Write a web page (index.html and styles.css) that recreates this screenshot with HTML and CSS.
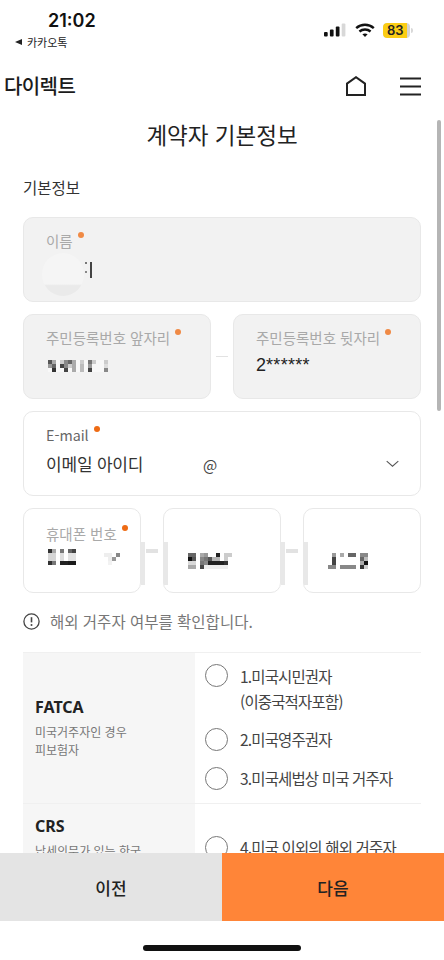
FILE: index.html
```html
<!DOCTYPE html>
<html lang="ko">
<head>
<meta charset="utf-8">
<title>계약자 기본정보</title>
<link rel="stylesheet" href="styles.css">
</head>
<body>
<div class="screen">
  <div class="status">
    <div class="status-left">
      <div class="time">21:02</div>
      <div class="back"><span class="tri"></span>카카오톡</div>
    </div>
    <div class="status-right">
      <svg class="signal" width="22" height="14" viewBox="0 0 22 14"><rect x="0" y="9" width="3.7" height="4.5" rx="1" fill="#111"/><rect x="5.9" y="6.5" width="3.7" height="7" rx="1" fill="#111"/><rect x="11.8" y="3.5" width="3.7" height="10" rx="1" fill="#111"/><rect x="17.7" y="0.5" width="3.7" height="13" rx="1" fill="#d8d8d8"/></svg>
      <svg class="wifi" width="20" height="15" viewBox="0 0 20 15"><path d="M1.2 5.2C6.2 .6 13.8 .6 18.8 5.2" fill="none" stroke="#111" stroke-width="2.4"/><path d="M4.4 8.5C7.6 5.8 12.4 5.8 15.6 8.5" fill="none" stroke="#111" stroke-width="2.4"/><path d="M7.4 11.3C8.9 10.1 11.1 10.1 12.6 11.3L10 14Z" fill="#111"/></svg>
      <div class="battery"><span class="batt-fill">83</span></div>
      <span class="batt-tip"></span>
    </div>
  </div>
  <header class="topbar">
    <div class="brand">다이렉트</div>
    <div class="top-icons">
      <svg width="20" height="20" viewBox="0 0 20 20"><path d="M1 19V7.6L10 1.2 19 7.6V19Z" fill="none" stroke="#222" stroke-width="2" stroke-linejoin="miter"/></svg>
      <svg width="21" height="19" viewBox="0 0 21 19"><path d="M0 1.5h21M0 9.5h21M0 17.5h21" stroke="#222" stroke-width="2"/></svg>
    </div>
  </header>
  <main class="content">
    <h1 class="title">계약자 기본정보</h1>
    <h2 class="section">기본정보</h2>

    <div class="field disabled">
      <div class="label">이름<i class="dot"></i></div>
      <div class="name-value"><span class="name-blur"></span><span class="caret"></span></div>
    </div>

    <div class="row id-row">
      <div class="field disabled">
        <div class="label">주민등록번호 앞자리<i class="dot"></i></div>
        <svg class="mosaic m-id" width="60" height="12" viewBox="0 0 60 12" shape-rendering="crispEdges">
          <rect width="60" height="12" fill="#f8f8f8"/>
          <rect x="0" y="0" width="4" height="4" fill="#555"/><rect x="4" y="0" width="4" height="4" fill="#aaa"/><rect x="12" y="0" width="4" height="4" fill="#ccc"/><rect x="16" y="0" width="4" height="4" fill="#888"/><rect x="20" y="0" width="4" height="4" fill="#666"/><rect x="24" y="0" width="4" height="4" fill="#aaa"/><rect x="32" y="0" width="4" height="4" fill="#ccc"/><rect x="40" y="0" width="4" height="4" fill="#777"/><rect x="44" y="0" width="4" height="4" fill="#ccc"/><rect x="56" y="0" width="4" height="4" fill="#ccc"/>
          <rect x="0" y="4" width="4" height="4" fill="#999"/><rect x="4" y="4" width="4" height="4" fill="#666"/><rect x="12" y="4" width="4" height="4" fill="#444"/><rect x="16" y="4" width="4" height="4" fill="#888"/><rect x="20" y="4" width="4" height="4" fill="#ccc"/><rect x="24" y="4" width="4" height="4" fill="#aaa"/><rect x="32" y="4" width="4" height="4" fill="#bbb"/><rect x="40" y="4" width="4" height="4" fill="#999"/><rect x="56" y="4" width="4" height="4" fill="#ddd"/>
          <rect x="4" y="8" width="4" height="4" fill="#333"/><rect x="16" y="8" width="4" height="4" fill="#444"/><rect x="24" y="8" width="4" height="4" fill="#aaa"/><rect x="32" y="8" width="4" height="4" fill="#bbb"/><rect x="40" y="8" width="4" height="4" fill="#444"/><rect x="56" y="8" width="4" height="4" fill="#888"/>
        </svg>
      </div>
      <span class="dash light"></span>
      <div class="field disabled">
        <div class="label">주민등록번호 뒷자리<i class="dot"></i></div>
        <div class="rrn">2<span class="stars">******</span></div>
      </div>
    </div>

    <div class="field">
      <div class="label dark">E-mail<i class="dot strong"></i></div>
      <div class="email-line">
        <span class="email-id">이메일 아이디</span>
        <span class="at">@</span>
        <svg class="chev" width="13" height="8" viewBox="0 0 13 8"><path d="M.7 1.2 6.5 6.2 12.3 1.2" fill="none" stroke="#555" stroke-width="1.1"/></svg>
      </div>
    </div>

    <div class="row phone-row">
      <div class="field phone first">
        <div class="label">휴대폰 번호<i class="dot strong"></i></div>
        <svg class="mosaic m-p1" width="72" height="16" viewBox="0 0 72 16" shape-rendering="crispEdges">
          <rect x="0" y="0" width="4" height="4" fill="#333"/><rect x="4" y="0" width="4" height="4" fill="#aaa"/><rect x="12" y="0" width="4" height="4" fill="#777"/><rect x="20" y="0" width="4" height="4" fill="#666"/><rect x="24" y="0" width="4" height="4" fill="#444"/>
          <rect x="0" y="4" width="8" height="8" fill="#d6d6d6"/><rect x="12" y="4" width="4" height="8" fill="#ddd"/><rect x="20" y="4" width="8" height="8" fill="#e2e2e2"/>
          <rect x="0" y="12" width="4" height="4" fill="#333"/><rect x="4" y="12" width="4" height="4" fill="#777"/><rect x="12" y="12" width="8" height="4" fill="#222"/><rect x="20" y="12" width="8" height="4" fill="#1a1a1a"/>
          <rect x="56" y="4" width="8" height="4" fill="#eee"/><rect x="68" y="4" width="4" height="4" fill="#888"/><rect x="64" y="8" width="4" height="4" fill="#999"/><rect x="60" y="8" width="4" height="4" fill="#eee"/><rect x="60" y="12" width="4" height="4" fill="#f2f2f2"/>
        </svg>
      </div>
      <span class="dash"></span>
      <div class="field phone">
        <svg class="mosaic m-rest" width="44" height="16" viewBox="0 0 44 16" shape-rendering="crispEdges">
          <rect x="0" y="0" width="8" height="4" fill="#666"/><rect x="12" y="0" width="4" height="4" fill="#aaa"/><rect x="16" y="0" width="4" height="4" fill="#999"/><rect x="28" y="0" width="4" height="4" fill="#222"/><rect x="36" y="0" width="8" height="4" fill="#ccc"/>
          <rect x="0" y="4" width="4" height="4" fill="#111"/><rect x="4" y="4" width="4" height="4" fill="#555"/><rect x="12" y="4" width="4" height="4" fill="#888"/><rect x="16" y="4" width="4" height="4" fill="#777"/><rect x="20" y="4" width="4" height="4" fill="#555"/><rect x="24" y="4" width="8" height="4" fill="#b5b5b5"/><rect x="36" y="4" width="4" height="4" fill="#ccc"/>
          <rect x="0" y="8" width="8" height="4" fill="#d8d8d8"/><rect x="12" y="8" width="4" height="4" fill="#777"/><rect x="16" y="8" width="4" height="4" fill="#888"/><rect x="20" y="8" width="16" height="4" fill="#222"/><rect x="36" y="8" width="4" height="4" fill="#333"/>
          <rect x="0" y="12" width="8" height="4" fill="#aaa"/><rect x="12" y="12" width="4" height="4" fill="#444"/><rect x="16" y="12" width="24" height="4" fill="#eee"/>
        </svg>
      </div>
      <span class="dash"></span>
      <div class="field phone">
        <svg class="mosaic m-rest" width="40" height="16" viewBox="0 0 40 16" shape-rendering="crispEdges">
          <rect x="4" y="0" width="4" height="4" fill="#999"/><rect x="12" y="0" width="4" height="4" fill="#aaa"/><rect x="20" y="0" width="8" height="4" fill="#666"/><rect x="32" y="0" width="8" height="4" fill="#888"/>
          <rect x="4" y="4" width="4" height="8" fill="#444"/><rect x="32" y="4" width="4" height="4" fill="#666"/><rect x="36" y="4" width="4" height="4" fill="#bbb"/>
          <rect x="32" y="8" width="4" height="4" fill="#aaa"/><rect x="36" y="8" width="4" height="4" fill="#111"/>
          <rect x="0" y="12" width="8" height="4" fill="#888"/><rect x="12" y="12" width="16" height="4" fill="#888"/><rect x="32" y="12" width="4" height="4" fill="#333"/><rect x="36" y="12" width="4" height="4" fill="#ccc"/>
        </svg>
      </div>
    </div>

    <div class="notice">
      <svg width="17" height="17" viewBox="0 0 17 17"><circle cx="8.5" cy="8.5" r="7.6" fill="none" stroke="#444" stroke-width="1.3"/><path d="M8.5 4.2v5.2" stroke="#444" stroke-width="1.6"/><circle cx="8.5" cy="12" r="1" fill="#444"/></svg>
      <span>해외 거주자 여부를 확인합니다.</span>
    </div>

    <section class="tbl">
      <div class="tr fatca">
        <div class="th">
          <strong>FATCA</strong>
          <p>미국거주자인 경우<br>피보험자</p>
        </div>
        <div class="td">
          <div class="opt two"><span class="radio"></span><span>1.미국시민권자<br>(이중국적자포함)</span></div>
          <div class="opt o2"><span class="radio"></span><span>2.미국영주권자</span></div>
          <div class="opt o3"><span class="radio"></span><span>3.미국세법상 미국 거주자</span></div>
        </div>
      </div>
      <div class="tr crs">
        <div class="th">
          <strong>CRS</strong>
          <p>납세의무가 있는 한국</p>
        </div>
        <div class="td">
          <div class="opt"><span class="radio"></span><span>4.미국 이외의 해외 거주자</span></div>
        </div>
      </div>
    </section>
  </main>
  <div class="scrollbar"></div>
  <footer class="bottom">
    <div class="actions">
      <button class="btn prev">이전</button>
      <button class="btn next">다음</button>
    </div>
    <div class="home-zone"><span class="home-bar"></span></div>
  </footer>
</div>
</body>
</html>
```

FILE: styles.css
```css
* { box-sizing: border-box; }
html, body { margin: 0; padding: 0; background: #fff; }
body { font-family: "Noto Sans CJK KR", "Noto Sans", sans-serif; color: #222; }
.screen { position: relative; width: 444px; height: 960px; overflow: hidden; background: #fff; }

.status { display: flex; justify-content: space-between; height: 66px; padding: 10px 0 0 15px; }
.time { font-family: "Inter", "Liberation Sans", sans-serif; font-weight: 600; font-size: 18px; line-height: 22px; padding-left: 33px; color: #111; }
.back { display: flex; align-items: center; font-size: 11px; line-height: 16px; margin-top: 2px; color: #222; }
.tri { width: 0; height: 0; border-style: solid; border-width: 3.5px 7px 3.5px 0; border-color: transparent #222 transparent transparent; margin-right: 5px; }
.status-right { display: flex; align-items: center; height: 40px; padding-right: 31px; }
.signal { margin-right: 9px; }
.wifi { margin-right: 8px; }
.battery { width: 27px; height: 15px; border-radius: 4px; background: #d4d4d4; overflow: hidden; }
.batt-fill { display: block; width: 24px; height: 15px; background: #fbcd14; border-radius: 4px 0 0 4px; font-family: "Inter", "Liberation Sans", sans-serif; font-size: 13px; font-weight: 600; line-height: 15px; padding-left: 4px; color: #222; }
.batt-tip { width: 2px; height: 5px; margin-left: 1px; border-radius: 0 2px 2px 0; background: #d8d8d8; }

.topbar { display: flex; justify-content: space-between; align-items: center; height: 40px; padding: 0 23px 0 4px; }
.brand { font-size: 20px; font-weight: 500; letter-spacing: -0.6px; color: #1b1b1b; line-height: 40px; }
.top-icons { display: flex; gap: 34px; align-items: center; }

.content { padding: 0 23px; }
.title { margin: 0; padding-top: 12px; font-size: 22.5px; font-weight: 400; line-height: 32px; text-align: center; color: #222; height: 46px; }
.section { margin: 0; padding-top: 25px; height: 65px; font-size: 15.5px; font-weight: 400; line-height: 20px; color: #333; }

.field { position: relative; height: 85px; border: 1.5px solid #e8e8e8; border-radius: 10px; padding: 13px 22px 0; background: #fff; }
.field.disabled { background: #f2f2f2; }
.label { font-size: 14.5px; line-height: 20px; color: #a9a9a9; white-space: nowrap; }
.label.dark { font-size: 14.3px; color: #666; }
.dot { display: inline-block; width: 6px; height: 6px; border-radius: 50%; background: #f08a45; margin-left: 5px; vertical-align: 9px; }
.dot.strong { background: #ee6b14; }

.name-value { position: relative; height: 30px; margin-top: 7px; }
.name-blur { position: absolute; left: -4px; top: -5px; width: 42px; height: 43px; border-radius: 50%; background: linear-gradient(#f5f5f5 72%, #eaeaea 76%); }
.caret { position: absolute; left: 44px; top: 4px; width: 1.5px; height: 16px; background: #444; }
.caret::before { content: ""; position: absolute; left: -5px; top: 0; width: 2px; height: 2px; background: #777; box-shadow: 0 9px 0 #888; }

.row { display: flex; align-items: center; margin-top: 12px; }
.id-row { margin-bottom: 12px; }
.id-row .field { flex: 0 0 188px; }
.id-row .dash { flex: 1; }
.dash { display: block; height: 2px; margin: 0 5px; background: #e2e2e2; }
.dash.light { height: 1px; }
.rrn { font-family: "Liberation Sans", sans-serif; font-size: 18px; line-height: 24px; margin-top: 5px; color: #222; }
.stars { letter-spacing: 0.3px; }
.mosaic { display: block; }
.m-id { margin: 11.5px 0 0 1.5px; }

.email-line { display: flex; align-items: center; height: 30px; margin-top: 4px; }
.email-id { font-size: 17px; letter-spacing: -0.2px; color: #333; line-height: 30px; width: 157px; }
.at { font-size: 15px; color: #444; }
.chev { margin-left: auto; margin-right: -1px; margin-top: -1px; }

.phone-row .field { flex: 1 1 0; min-width: 0; padding-top: 15px; }
.phone-row .dash { flex: 0 0 12px; height: 4px; margin: 0 5px; }
.phone:not(.first)::before, .phone:not(:last-child)::after { content: ""; position: absolute; top: 33px; width: 4px; height: 43px; background: #e8e8e8; }
.phone:not(.first)::before { left: 0; }
.phone:not(:last-child)::after { right: -5px; }
.m-p1 { margin: 4.5px 0 0 1.5px; }
.m-rest { margin: 28.5px 0 0 1.5px; }

.notice { display: flex; align-items: center; gap: 10px; height: 59px; padding-bottom: 3px; font-size: 15.5px; color: #777; white-space: nowrap; }

.tbl { border-top: 1px solid #f0f0f0; }
.tr { display: flex; border-bottom: 1px solid #f0f0f0; }
.fatca { height: 151px; }
.crs { height: 120px; }
.th { flex: 0 0 172px; background: #f6f6f6; padding-left: 12px; }
.fatca .th { padding-top: 43px; }
.crs .th { padding-top: 11px; }
.th strong { display: block; font-family: "Noto Sans", sans-serif; font-size: 16px; line-height: 22px; font-weight: 700; color: #222; }
.th p { margin: 5px 0 0; font-size: 12px; line-height: 18px; color: #777; }
.td { flex: 1; padding-left: 10px; }
.opt { display: flex; align-items: center; gap: 12px; font-size: 15.5px; line-height: 25px; letter-spacing: -0.85px; color: #444; white-space: nowrap; }
.opt.two { align-items: flex-start; padding-top: 11px; }
.o2 { margin-top: 13px; }
.o3 { margin-top: 14px; }
.crs .opt { margin-top: 31px; }
.radio { flex: 0 0 23px; width: 23px; height: 23px; border: 1.5px solid #777; border-radius: 50%; background: #fff; }

.scrollbar { position: absolute; left: 437px; top: 120px; width: 4px; height: 291px; border-radius: 2px; background: #b5b5b5; }

.bottom { position: absolute; left: 0; right: 0; bottom: 0; background: #fff; }
.actions { display: flex; height: 68px; }
.btn { flex: 1; border: 0; margin: 0; padding: 0; font-family: inherit; font-size: 17px; font-weight: 500; color: #222; }
.prev { background: #e4e4e4; }
.next { background: #ff8538; }
.home-zone { display: flex; justify-content: center; height: 39px; padding-top: 24px; }
.home-bar { display: block; width: 158px; height: 6px; border-radius: 3px; background: #111; }
```
